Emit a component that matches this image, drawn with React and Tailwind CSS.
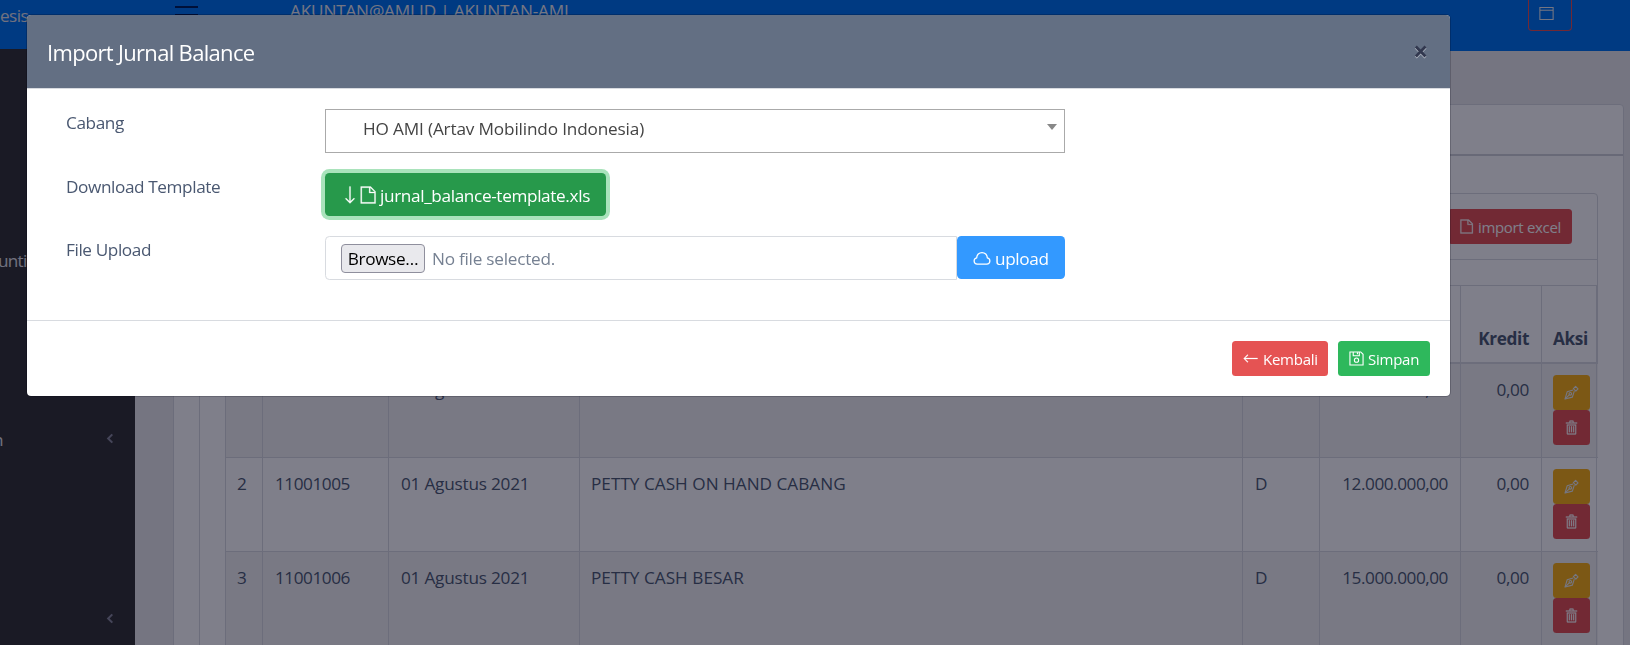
import React from 'react';

function Icon({ className, children }) {
  return (
    <svg viewBox="0 0 512 512" fill="currentColor" className={`shrink-0 ${className}`} aria-hidden="true">
      {children}
    </svg>
  );
}

const FileIcon = ({ className }) => (
  <Icon className={className}>
    <path
      d="M334.627,16H48V496H472V153.373ZM440,166.627V168H320V48h1.373ZM80,464V48H288V200H440V464Z"
      stroke="currentColor"
      strokeWidth="8"
    />
  </Icon>
);

const ArrowDownIcon = ({ className }) => (
  <Icon className={className}>
    <path
      d="M367.997 338.75l-95.998 95.997V17.503h-32v417.244L144 338.75l-22.627 22.627L256 496l134.624-134.623z"
      stroke="currentColor"
      strokeWidth="8"
    />
  </Icon>
);

const ArrowLeftIcon = ({ className }) => (
  <Icon className={className}>
    <path
      d="M497.333 239.999H80.092l95.995-95.995-22.627-22.627L18.837 256 153.46 390.623l22.627-22.627-95.997-95.997h417.243z"
      stroke="currentColor"
      strokeWidth="8"
    />
  </Icon>
);

const SaveIcon = ({ className }) => (
  <Icon className={className}>
    <g fill="none" stroke="currentColor" strokeWidth="38">
      <path d="M32 32H400L480 112V480H32Z" />
      <path d="M144 32V160H352V32" />
      <path d="M288 40V112" />
      <circle cx="256" cy="312" r="72" />
    </g>
  </Icon>
);

const CloudIcon = ({ className }) => (
  <Icon className={className}>
    <path
      d="M120 432H392A92 92 0 0 0 406 250A150 150 0 0 0 106 250A92 92 0 0 0 120 432Z"
      fill="none"
      stroke="currentColor"
      strokeWidth="36"
      strokeLinejoin="round"
    />
  </Icon>
);

const TrashIcon = ({ className }) => (
  <Icon className={className}>
    <g stroke="currentColor" strokeWidth="8">
      <path d="M96 472a23.82 23.82 0 0 0 23.579 24h272.842A23.82 23.82 0 0 0 416 472V152H96Zm32-288h256v280H128Z" />
      <path d="M168 216h32v200h-32zM240 216h32v200h-32zM312 216h32v200h-32z" />
      <path d="M328 88V40c0-13.458-9.488-24-21.6-24H205.6C193.488 16 184 26.542 184 40v48H64v32h384V88ZM216 48h80v40h-80Z" />
    </g>
  </Icon>
);

const PenNibIcon = ({ className }) => (
  <Icon className={className}>
    <g fill="none" stroke="currentColor" strokeWidth="38" strokeLinejoin="round">
      <path d="M396 48L478 130L404 208L320 124Z" />
      <path d="M312 168L108 232L34 480L286 414L352 208" />
      <path d="M40 474L180 334" />
      <circle cx="216" cy="300" r="44" />
    </g>
  </Icon>
);

const WindowIcon = ({ className }) => (
  <Icon className={className}>
    <path fillRule="evenodd" d="M12 30H500V482H12ZM48 66V124H464V66ZM48 160V446H464V160Z" />
  </Icon>
);

const ChevronIcon = () => (
  <svg viewBox="0 0 8 12" className="h-[11px] w-2" fill="none" stroke="#8b8b9c" strokeWidth="2.2">
    <path d="M6.5 1.5L2 6L6.5 10.5" />
  </svg>
);

const COLS = 'grid grid-cols-[37px_126px_191px_663px_77px_141px_81px_56px]';

const rows = [
  { no: 1, code: '11001004', date: '01 Agustus 2021', name: 'PETTY CASH', type: 'D', debit: '10.000.000,00', credit: '0,00' },
  { no: 2, code: '11001005', date: '01 Agustus 2021', name: 'PETTY CASH ON HAND CABANG', type: 'D', debit: '12.000.000,00', credit: '0,00' },
  { no: 3, code: '11001006', date: '01 Agustus 2021', name: 'PETTY CASH BESAR', type: 'D', debit: '15.000.000,00', credit: '0,00' },
];

function Cell({ className = '', children }) {
  return <div className={`border-l border-[#d8dbe0] pt-[13px] ${className}`}>{children}</div>;
}

function Row({ row, striped }) {
  return (
    <div className={`${COLS} h-[94px] border-b border-[#d8dbe0] ${striped ? 'bg-[#f2f2f3]' : 'bg-white'}`}>
      <Cell className="pl-[11px]">{row.no}</Cell>
      <Cell className="pl-3 tracking-[-0.46px]">{row.code}</Cell>
      <Cell className="pl-3 tracking-[-0.22px]">{row.date}</Cell>
      <Cell className="pl-[11px] tracking-[0.01px]">{row.name}</Cell>
      <Cell className="pl-3">{row.type}</Cell>
      <Cell className="pr-3 text-right tracking-[-0.46px]">{row.debit}</Cell>
      <Cell className="pr-3 text-right">{row.credit}</Cell>
      <div className="border-x border-[#d8dbe0] pt-[11px] pl-[11px]">
        <div className="flex h-[35px] w-[37px] items-center justify-center rounded-[3.5px] bg-[#f9b115] text-[#ebedef]">
          <PenNibIcon className="size-[15px]" />
        </div>
        <div className="flex h-[35px] w-[37px] items-center justify-center rounded-[3.5px] bg-[#e55353] text-white">
          <TrashIcon className="size-[15px]" />
        </div>
      </div>
    </div>
  );
}

function Sidebar() {
  return (
    <aside className="flex w-[135px] shrink-0 flex-col bg-[#343434] text-[17.2px] tracking-[-0.35px] text-[#e3e3e8]">
      <div className="h-[49px] bg-[#0074ee] pt-[3px] leading-[26px] tracking-[-0.6px]">esis</div>
      <div className="mt-[199px] h-[26px] leading-[26px] tracking-[-0.75px]">
        <span className="-ml-[2px]">unti</span>
      </div>
      <div className="mt-[151px] flex h-[26px] items-center leading-[26px]">
        <span className="-ml-[7px] w-[113px] pt-1">n</span>
        <ChevronIcon />
      </div>
      <div className="mt-[154px] flex h-[26px] items-center">
        <span className="w-[106px]" />
        <ChevronIcon />
      </div>
    </aside>
  );
}

function Topbar() {
  return (
    <header className="flex h-[51px] shrink-0 items-start bg-[#0074ee]">
      <div className="mt-[6px] ml-10 flex w-[23px] flex-col gap-[6px]">
        <div className="h-0.5 bg-[#00205a]" />
        <div className="h-0.5 bg-[#00205a]" />
        <div className="h-0.5 bg-[#00205a]" />
      </div>
      <div className="-mt-[2px] ml-[92px] text-[17.2px] leading-[26px] tracking-[-0.18px] text-[#ebedef]">
        AKUNTAN@AMI.ID | AKUNTAN-AMI
      </div>
      <div className="mr-[58px] ml-auto flex h-[31px] w-11 justify-center rounded-b-[4px] border border-t-0 border-[#e55353] pt-[6px] pr-[7px] text-[#ebedef]">
        <WindowIcon className="size-[15px]" />
      </div>
    </header>
  );
}

function Page() {
  return (
    <div className="flex h-[645px] overflow-hidden bg-[#ebebed]">
      <Sidebar />
      <div className="flex min-w-0 flex-1 flex-col">
        <Topbar />
        <div className="mt-[53px] mr-[6px] ml-[38px] h-[700px] shrink-0 rounded-[4px] border border-[#d8dbe0] bg-white">
          <div className="h-[51px] border-b-2 border-[#d0d3d9]" />
          <div className="mt-[37px] mr-[25px] ml-[25px] h-[700px] rounded-[4px] border border-[#d8dbe0]">
            <div className="flex h-[66px] items-start justify-end border-b border-[#d8dbe0] pt-[15px] pr-[25px]">
              <div className="flex h-[35px] items-center gap-1 rounded-[3.5px] bg-[#e55353] px-[11px] text-[15px] tracking-[-0.32px] text-white">
                <FileIcon className="size-[15px]" />
                <span className="pt-px">import excel</span>
              </div>
            </div>
            <div className="-mr-px ml-[25px] pt-[25px] text-[17.2px] leading-[26px] tracking-[-0.35px] text-[#4f5d73]">
              <div className={`${COLS} h-[79px] border-t border-b-2 border-[#d8dbe0] font-bold`}>
                <Cell />
                <Cell />
                <Cell />
                <Cell />
                <Cell />
                <Cell />
                <Cell className="flex items-end justify-end pr-3 pb-[10px]">Kredit</Cell>
                <div className="flex items-end border-x border-[#d8dbe0] pb-[10px] pl-[11px]">Aksi</div>
              </div>
              {rows.map((row, i) => (
                <Row key={row.no} row={row} striped={i % 2 === 0} />
              ))}
            </div>
          </div>
        </div>
      </div>
    </div>
  );
}

function FormRow({ label, children }) {
  return (
    <div className="flex">
      <div className="w-[259px] pt-px leading-[26px] tracking-[-0.4px]">{label}</div>
      {children}
    </div>
  );
}

function ImportModal() {
  return (
    <div className="fixed top-[14px] left-[26px] w-[1425px] rounded-[5px] border border-[rgba(0,0,21,0.2)] bg-white bg-clip-padding text-[17.2px] tracking-[-0.35px] text-[#4a5871]">
      <div className="flex h-[74px] items-center justify-between rounded-t-[4px] border-b border-[#d8dbe0] bg-[#636f83] pr-[22px] pl-[20px] text-white">
        <h5 className="pt-px text-[22px] tracking-[-0.68px]">Import Jurnal Balance</h5>
        <span className="-mt-[2px] text-[26px] leading-none font-bold tracking-normal text-[#32384f] [text-shadow:0_1px_0_#b5bac4]">×</span>
      </div>
      <div className="flex h-[231px] flex-col gap-5 pt-5 pl-[39px]">
        <FormRow label="Cabang">
          <div className="flex h-11 w-[740px] justify-between border border-[#aaa] pt-[6px] pr-[7px] pl-[37px] leading-[26px] tracking-[-0.16px] text-[#444]">
            <span>HO AMI (Artav Mobilindo Indonesia)</span>
            <span className="mt-2 h-0 w-0 border-x-[5px] border-t-[6px] border-x-transparent border-t-[#888]" />
          </div>
        </FormRow>
        <FormRow label="Download Template">
          <div className="flex h-[43px] w-[281px] items-center rounded-[4.4px] bg-[#27994b] pl-[16px] text-white ring-4 ring-[#a9e3bb]">
            <ArrowDownIcon className="size-[18px]" />
            <FileIcon className="mr-[3px] size-[18px]" />
            <span className="pt-[2px] tracking-[-0.36px]">jurnal_balance-template.xls</span>
          </div>
        </FormRow>
        <FormRow label="File Upload">
          <div className="flex h-11 w-[632px] items-center rounded-l-[4.4px] border border-[#d8dbe0] pl-[15px] text-[#768192]">
            <div className="mr-[7px] flex h-[29px] w-[84px] items-center justify-center rounded-[4px] border border-[#8f8f9d] bg-[#e9e9ed] pt-[2px] text-black">
              Browse…
            </div>
            <span className="pt-[2px] tracking-[-0.25px]">No file selected.</span>
          </div>
          <div className="flex h-[43px] w-[108px] items-center gap-1 rounded-[4.4px] bg-[#3399ff] pl-4 text-white">
            <CloudIcon className="size-[18px]" />
            <span className="pt-[2px]">upload</span>
          </div>
        </FormRow>
      </div>
      <div className="flex h-[76px] items-center justify-end gap-[10px] border-t border-[#d8dbe0] pr-5 text-[15px] tracking-[-0.25px] text-white">
        <div className="flex h-[35px] w-24 items-center gap-[5px] rounded-[3.5px] bg-[#e55353] pl-[11px]">
          <ArrowLeftIcon className="size-[15px]" />
          <span className="pt-[2px]">Kembali</span>
        </div>
        <div className="flex h-[35px] w-[92px] items-center gap-1 rounded-[3.5px] bg-[#2eb85c] pl-[11px]">
          <SaveIcon className="size-[15px]" />
          <span className="pt-[2px]">Simpan</span>
        </div>
      </div>
    </div>
  );
}

export default function App() {
  return (
    <div className="h-[645px] overflow-hidden font-['Open_Sans','Noto_Sans',sans-serif]">
      <Page />
      <div className="fixed inset-0 bg-[rgba(0,0,21,0.5)]" />
      <ImportModal />
    </div>
  );
}
